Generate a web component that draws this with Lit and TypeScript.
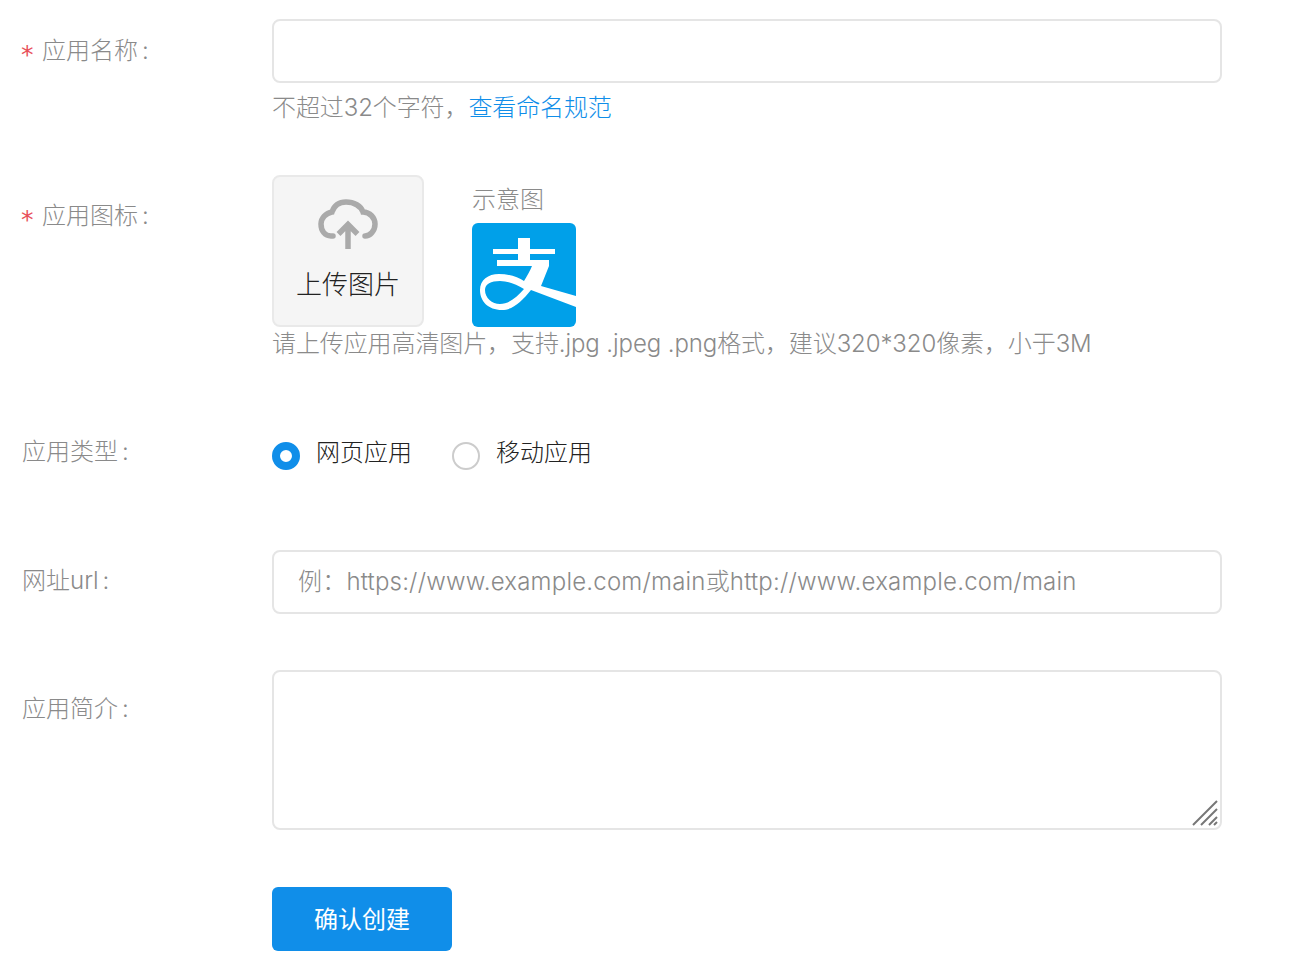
import { LitElement, html, css } from "lit";
import { customElement } from "lit/decorators.js";

@customElement("app-root")
export class AppRoot extends LitElement {
  static styles = css`
    :host { display: block; width: 1300px; height: 978px; overflow: hidden; background: #fff;
      font-family: "Inter", "Noto Sans CJK SC", sans-serif; font-weight: 300; font-size: 24px; color: #8a8a8a; }
    .form { display: flex; flex-direction: column; padding: 19px 78px 0 22px; }
    .row { display: grid; grid-template-columns: 250px 950px; }
    .label { display: flex; align-items: center; height: 64px; white-space: nowrap; line-height: 32px; }
    .req { color: #e8505b; width: 20px; flex: none; font-family: "DejaVu Sans", sans-serif; font-weight: 400; font-size: 25px; line-height: 32px; padding-top: 7px; margin-left: -1px; margin-right: 1px; }
    .colon { margin-left: 4px; }
    .field { box-sizing: border-box; width: 950px; height: 64px; border: 2px solid #e5e5e5; border-radius: 8px;
      background: #fff; display: flex; align-items: center; padding: 0 24px 6px; white-space: nowrap; letter-spacing: 0.2px; }
    .hint { height: 36px; line-height: 36px; margin-top: 7px; white-space: nowrap; letter-spacing: -0.1px; }
    .link { color: #108ee9; }
    .upload-row { display: flex; gap: 48px; }
    .upload { box-sizing: border-box; width: 152px; height: 152px; border: 2px solid #e9e9e9; border-radius: 8px;
      background: #f5f5f5; display: flex; flex-direction: column; align-items: center; color: #222; }
    .upload svg { margin-top: 20px; flex: none; }
    .upload span { line-height: 34px; margin-top: 17px; font-size: 26px; }
    .sample { display: flex; flex-direction: column; }
    .sample-label { height: 48px; line-height: 49px; }
    .logo { display: block; width: 104px; height: 104px; }
    .radios { display: flex; align-items: center; height: 36px; margin-top: -2px; color: #222; }
    .radio { box-sizing: border-box; width: 28px; height: 28px; border-radius: 50%; flex: none; margin-top: 6px; background: #fff; }
    .radio.on { border: 8px solid #108ee9; }
    .radio.off { border: 2px solid #ccc; }
    .radio-text { margin-left: 16px; margin-right: 40px; line-height: 36px; }
    .ta { box-sizing: border-box; width: 950px; height: 160px; border: 2px solid #e5e5e5; border-radius: 8px; position: relative; }
    .grip { position: absolute; right: 2px; bottom: 2px; display: block; }
    .btn { box-sizing: border-box; width: 180px; height: 64px; background: #108ee9; color: #fff; border-radius: 6px;
      display: flex; align-items: center; justify-content: center; padding-bottom: 3px; font-weight: 400; }
    .r2 { margin-top: 49px; }
    .r3 { margin-top: 75px; }
    .r4 { margin-top: 79px; }
    .r5 { margin-top: 56px; }
    .r6 { margin-top: 57px; }
    .r2 .label { height: 82px; }
    .r3 .label { height: 30px; }
    .r4 .label { height: 62px; }
    .r5 .label { height: 78px; }
    .hint2 { margin-top: -1px; }
  `;

  render() {
    return html`
      <div class="form">
        <div class="row">
          <div class="label"><span class="req">*</span>应用名称<span class="colon">:</span></div>
          <div>
            <div class="field"></div>
            <div class="hint">不超过32个字符，<span class="link">查看命名规范</span></div>
          </div>
        </div>
        <div class="row r2">
          <div class="label"><span class="req">*</span>应用图标<span class="colon">:</span></div>
          <div>
            <div class="upload-row">
              <div class="upload">
                <svg width="60" height="54" viewBox="0 0 60 54" fill="none" stroke="#aaa" stroke-width="5.500" stroke-linecap="round">
                  <path d="M15 39H13C7 39 3 34 3 27C3 21 8 16 14 15C16 9 21 5 28 5C36 5 43 9 45 15C52 15 57 21 57 27C57 34 52 39 47 39" />
                  <path d="M30 52V28M20.500 37L30 27.500L39.500 37" stroke-linecap="butt" />
                </svg>
                <span>上传图片</span>
              </div>
              <div class="sample">
                <div class="sample-label">示意图</div>
                <svg class="logo" viewBox="0 0 104 104">
                  <rect width="104" height="104" rx="6" fill="#00a0e9" />
                  <path fill="#fff" fill-rule="evenodd" d="M77 43L69 63L104 73V84L59 67C50 78 41 87 30 87C16 87 8 78 8 67C8 57 16 51 27 51C37 51 46 54 52 58C55 53 58 48 60 43H25V37H46V31H21V26H46V15H58V26H83V31H58V37H77ZM52 66C44 61 36 58 28 58C19 58 13 61 13 67C13 75 20 81 28 81C37 81 45 74 52 66Z" />
                </svg>
              </div>
            </div>
            <div class="hint hint2">请上传应用高清图片，支持.jpg .jpeg .png格式，建议320*320像素，小于3M</div>
          </div>
        </div>
        <div class="row r3">
          <div class="label">应用类型<span class="colon">:</span></div>
          <div class="radios">
            <span class="radio on"></span><span class="radio-text">网页应用</span>
            <span class="radio off"></span><span class="radio-text">移动应用</span>
          </div>
        </div>
        <div class="row r4">
          <div class="label">网址url<span class="colon">:</span></div>
          <div class="field">例：https://www.example.com/main或http://www.example.com/main</div>
        </div>
        <div class="row r5">
          <div class="label">应用简介<span class="colon">:</span></div>
          <div class="ta">
            <svg class="grip" width="26" height="26" viewBox="0 0 26 26" stroke="#777" stroke-width="2" fill="none">
              <path d="M1 25L25 1M9 25L25 9M17 25L25 17M22 25L25 22" />
            </svg>
          </div>
        </div>
        <div class="row r6">
          <div></div>
          <div class="btn">确认创建</div>
        </div>
      </div>
    `;
  }
}
